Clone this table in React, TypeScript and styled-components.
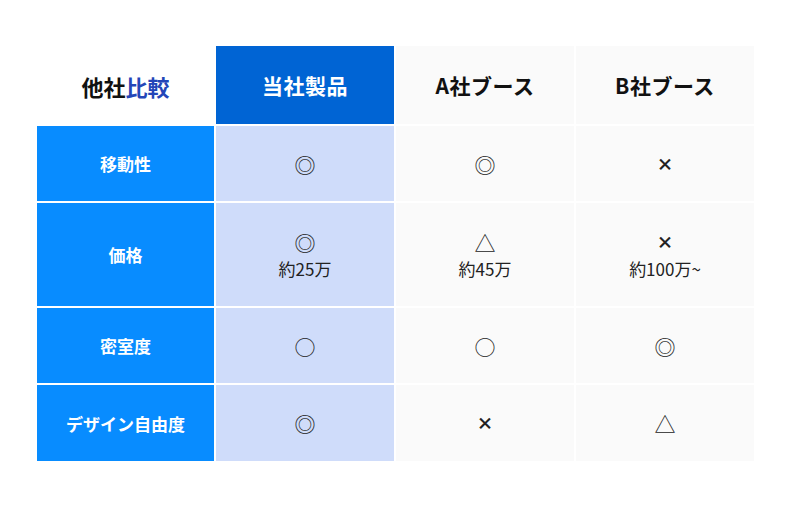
import styled, { createGlobalStyle } from "styled-components";

type Mark = "◎" | "○" | "△" | "×";

interface Row {
  label: string;
  cells: { mark: Mark; note?: string }[];
}

const rows: Row[] = [
  { label: "移動性", cells: [{ mark: "◎" }, { mark: "◎" }, { mark: "×" }] },
  {
    label: "価格",
    cells: [
      { mark: "◎", note: "約25万" },
      { mark: "△", note: "約45万" },
      { mark: "×", note: "約100万~" },
    ],
  },
  { label: "密室度", cells: [{ mark: "○" }, { mark: "○" }, { mark: "◎" }] },
  { label: "デザイン自由度", cells: [{ mark: "◎" }, { mark: "×" }, { mark: "△" }] },
];

const App = () => (
  <>
    <GlobalStyle />
    <Page>
      <Table>
        <TitleCell>
          <span>
            他社<Accent>比較</Accent>
          </span>
        </TitleCell>
        <HeadCell primary>当社製品</HeadCell>
        <HeadCell>A社ブース</HeadCell>
        <HeadCell>B社ブース</HeadCell>

        {rows.map((row) => (
          <RowGroup key={row.label}>
            <LabelCell>{row.label}</LabelCell>
            {row.cells.map((c, i) => (
              <ValueCell key={i} primary={i === 0}>
                <Symbol cross={c.mark === "×"}>{c.mark}</Symbol>
                {c.note && <Note>{c.note}</Note>}
              </ValueCell>
            ))}
          </RowGroup>
        ))}
      </Table>
    </Page>
  </>
);

const GlobalStyle = createGlobalStyle`
  body {
    margin: 0;
    background: #fff;
    font-family: "Noto Sans CJK JP", "Noto Sans", sans-serif;
  }
`;

const Page = styled.div`
  width: 800px;
  height: 511px;
  padding: 46px 0 0 37px;
  box-sizing: border-box;
`;

const Table = styled.div`
  display: grid;
  grid-template-columns: 177px 178px 178px 178px;
  grid-template-rows: 78px 75px 103px 75px 76px;
  gap: 2px;
  width: 717px;
`;

const RowGroup = styled.div`
  display: contents;
`;

const Center = styled.div`
  display: flex;
  flex-direction: column;
  align-items: center;
  justify-content: center;
`;

const TitleCell = styled(Center)`
  font-size: 22px;
  font-weight: 700;
  color: #111;
  white-space: nowrap;
  padding-top: 2px;
`;

const Accent = styled.span`
  color: #2446b8;
`;

const HeadCell = styled(Center)<{ primary?: boolean }>`
  background: ${({ primary }) => (primary ? "#0064d4" : "#fafafa")};
  color: ${({ primary }) => (primary ? "#fff" : "#111")};
  font-size: 21px;
  font-weight: 700;
  letter-spacing: 0.5px;
`;

const LabelCell = styled(Center)`
  background: #088cff;
  color: #fff;
  font-size: 17px;
  font-weight: 700;
`;

const ValueCell = styled(Center)<{ primary?: boolean }>`
  background: ${({ primary }) => (primary ? "#cfdcfa" : "#fafafa")};
  color: #222;
`;

const Symbol = styled.span<{ cross?: boolean }>`
  font-size: ${({ cross }) => (cross ? "17px" : "21px")};
  font-weight: ${({ cross }) => (cross ? 900 : 400)};
  line-height: 28px;
  color: #222;
`;

const Note = styled.span`
  font-size: 17px;
  line-height: 26px;
  color: #222;
`;

export default App;
